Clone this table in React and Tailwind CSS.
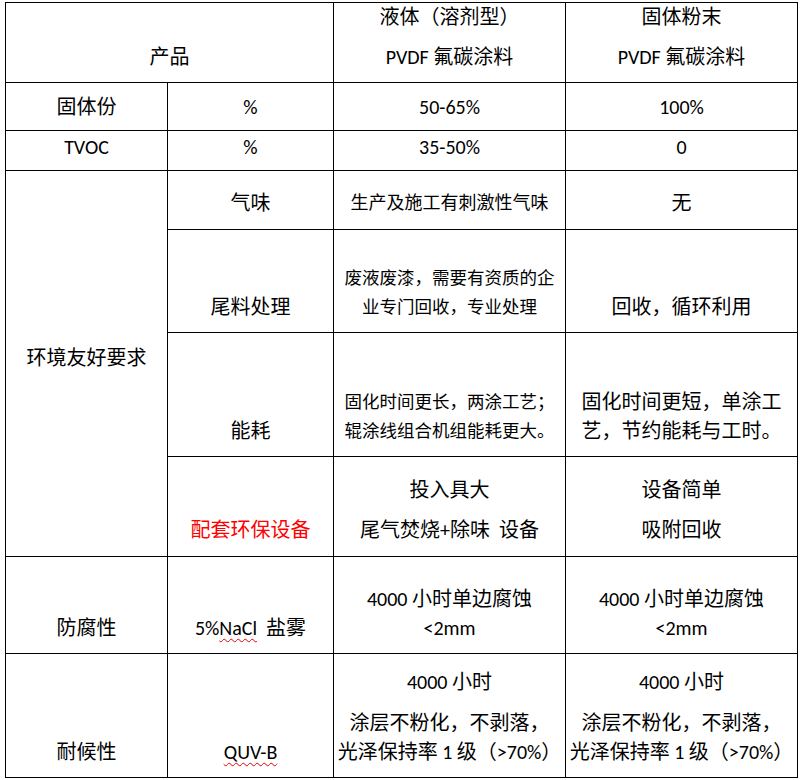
import React from "react";
import clsx from "clsx";

// one grid cell with the right and bottom rule; the container draws top/left
const Cell = ({ className, children }) => (
  <div
    className={clsx(
      "flex flex-col items-center border-b border-r border-black text-center",
      className
    )}
  >
    {children}
  </div>
);

const L40 = ({ children, className }) => (
  <div className={clsx("whitespace-pre leading-[40px]", className)}>{children}</div>
);

const L29 = ({ children, className }) => (
  <div className={clsx("whitespace-pre leading-[29px]", className)}>{children}</div>
);

const Squiggle = ({ children }) => (
  <span className="underline decoration-wavy decoration-red-600 decoration-1 underline-offset-[3px]">
    {children}
  </span>
);

export default function App() {
  return (
    <div className="min-h-screen bg-white pl-[5px] pt-[2px] font-[Carlito,Lato,'Noto_Sans_CJK_SC',sans-serif] text-[20px] text-black">
      <div className="grid w-[793px] grid-cols-[162px_166px_232px_232px] grid-rows-[80px_48px_40px_59px_103px_124px_100px_97px_124px] border-l border-t border-black">
        {/* header */}
        <Cell className="col-span-2 justify-end pb-[5px]">
          <L40>产品</L40>
        </Cell>
        <Cell className="justify-end pb-[5px]">
          <L40>液体（溶剂型）</L40>
          <L40>PVDF 氟碳涂料</L40>
        </Cell>
        <Cell className="justify-end pb-[5px]">
          <L40>固体粉末</L40>
          <L40>PVDF 氟碳涂料</L40>
        </Cell>

        {/* 固体份 */}
        <Cell className="justify-center">固体份</Cell>
        <Cell className="justify-center">%</Cell>
        <Cell className="justify-center">50-65%</Cell>
        <Cell className="justify-center">100%</Cell>

        {/* TVOC */}
        <Cell className="justify-center pb-2">TVOC</Cell>
        <Cell className="justify-center pb-2">%</Cell>
        <Cell className="justify-center pb-2">35-50%</Cell>
        <Cell className="justify-center pb-2">0</Cell>

        {/* environment group */}
        <Cell className="row-span-4 justify-center pb-[11px]">环境友好要求</Cell>
        <Cell className="justify-center pt-[6px]">气味</Cell>
        <Cell className="justify-center pt-[6px] text-[18px]">生产及施工有刺激性气味</Cell>
        <Cell className="justify-center pt-[6px]">无</Cell>

        <Cell className="justify-end pb-[10px]">
          <L29>尾料处理</L29>
        </Cell>
        <Cell className="justify-end pb-[10px] text-[17.5px]">
          <L29>废液废漆，需要有资质的企</L29>
          <L29>业专门回收，专业处理</L29>
        </Cell>
        <Cell className="justify-end pb-[10px]">
          <L29>回收，循环利用</L29>
        </Cell>

        <Cell className="justify-end pb-[10px]">
          <L29>能耗</L29>
        </Cell>
        <Cell className="justify-end pb-[10px] text-[17.5px]">
          <L29>固化时间更长，两涂工艺；</L29>
          <L29>辊涂线组合机组能耗更大。</L29>
        </Cell>
        <Cell className="justify-end pb-[10px]">
          <L29>固化时间更短，单涂工</L29>
          <L29>艺，节约能耗与工时。</L29>
        </Cell>

        <Cell className="justify-end pb-[6px]">
          <L40 className="text-[#ff0000]">配套环保设备</L40>
        </Cell>
        <Cell className="justify-end pb-[6px]">
          <L40>投入具大</L40>
          <L40>尾气焚烧+除味  设备</L40>
        </Cell>
        <Cell className="justify-end pb-[6px]">
          <L40>设备简单</L40>
          <L40>吸附回收</L40>
        </Cell>

        {/* 防腐性 */}
        <Cell className="justify-end pb-[10px]">
          <L29>防腐性</L29>
        </Cell>
        <Cell className="justify-end pb-[10px]">
          <L29>
            5%<Squiggle>NaCl</Squiggle>  盐雾
          </L29>
        </Cell>
        <Cell className="justify-end pb-[10px]">
          <L29>4000 小时单边腐蚀</L29>
          <L29>&lt;2mm</L29>
        </Cell>
        <Cell className="justify-end pb-[10px]">
          <L29>4000 小时单边腐蚀</L29>
          <L29>&lt;2mm</L29>
        </Cell>

        {/* 耐候性 */}
        <Cell className="justify-end pb-[10px]">
          <L29>耐候性</L29>
        </Cell>
        <Cell className="justify-end pb-[10px]">
          <L29>
            <Squiggle>QUV-B</Squiggle>
          </L29>
        </Cell>
        <Cell className="justify-end pb-[10px]">
          <L29 className="mb-[12px]">4000 小时</L29>
          <L29>涂层不粉化，不剥落，</L29>
          <L29>光泽保持率 1 级（&gt;70%）</L29>
        </Cell>
        <Cell className="justify-end pb-[10px]">
          <L29 className="mb-[12px]">4000 小时</L29>
          <L29>涂层不粉化，不剥落，</L29>
          <L29>光泽保持率 1 级（&gt;70%）</L29>
        </Cell>
      </div>
    </div>
  );
}
